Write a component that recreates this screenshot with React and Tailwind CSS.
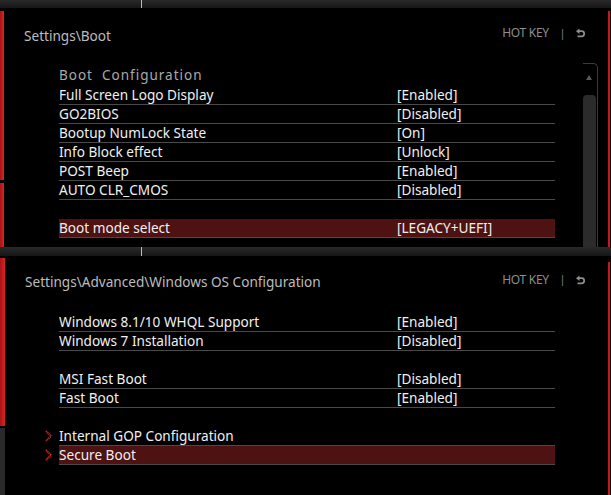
import React from "react";

const bootRows = [
  { label: "Full Screen Logo Display", value: "[Enabled]" },
  { label: "GO2BIOS", value: "[Disabled]" },
  { label: "Bootup NumLock State", value: "[On]" },
  { label: "Info Block effect", value: "[Unlock]" },
  { label: "POST Beep", value: "[Enabled]" },
  { label: "AUTO CLR_CMOS", value: "[Disabled]" },
  { blank: true },
  { label: "Boot mode select", value: "[LEGACY+UEFI]", active: true },
];

const osRows = [
  { label: "Windows 8.1/10 WHQL Support", value: "[Enabled]" },
  { label: "Windows 7 Installation", value: "[Disabled]" },
  { blank: true },
  { label: "MSI Fast Boot", value: "[Disabled]" },
  { label: "Fast Boot", value: "[Enabled]" },
  { blank: true },
  { label: "Internal GOP Configuration", arrow: "dim" },
  { label: "Secure Boot", arrow: "red", active: true },
];

const Chevron = ({ color }) => (
  <svg width="7" height="12" viewBox="0 0 7 12" className="absolute left-[-14px] top-[3px]">
    <polyline points="1,1 6,6 1,11" fill="none" stroke={color} strokeWidth="2" strokeDasharray="1.3 0.6" />
  </svg>
);

const Row = ({ label, value, active, arrow, blank }) => {
  if (blank) return <div className="h-[19px]" />;
  return (
    <div
      className={`relative h-[19px] flex items-center border-b border-[#4a4a4a] text-[13.6px] text-[#f0f0f0] ${
        active ? "bg-[#4e1212]" : ""
      }`}
    >
      {arrow && <Chevron color={arrow === "red" ? "#e3201c" : "#b02a26"} />}
      <span className="w-[338px] shrink-0 leading-none">{label}</span>
      {value && <span className="leading-none">{value}</span>}
    </div>
  );
};

const HotKey = () => (
  <div className="flex items-center mb-[6px] text-[12px] text-[#8e8e8e] tracking-[-0.3px]">
    <span>HOT KEY</span>
    <span className="ml-[11px] text-[10px]">|</span>
    <svg width="11" height="10" viewBox="0 0 11 10" className="ml-[10px]">
      <path d="M4.5 0.5 L1 3.2 L4.5 6 Z" fill="#8e8e8e" />
      <path d="M3 3.2 H6.6 A2.6 2.6 0 0 1 6.6 8.4 H2.5" fill="none" stroke="#8e8e8e" strokeWidth="1.7" />
    </svg>
  </div>
);

const Band = ({ h }) => (
  <div className={`${h} relative bg-gradient-to-b from-[#2a2a2a] to-[#161616]`}>
    <div className="absolute left-[141px] top-0 bottom-0 w-px bg-[#bdbdbd]" />
  </div>
);

export default function App() {
  return (
    <div
      className="w-[611px] h-[495px] bg-black flex flex-col overflow-hidden"
      style={{ fontFamily: '"Noto Sans", "Open Sans", sans-serif' }}
    >
      <Band h="h-[8px]" />

      {/* Settings\Boot */}
      <div className="h-[239px] flex">
        <div className="w-[4px] flex flex-col pt-[3px] gap-[3px]">
          <div className="h-[169px] bg-gradient-to-r from-[#a51414] to-[#e02222]" />
          <div className="flex-1 bg-gradient-to-r from-[#a51414] to-[#e02222]" />
        </div>
        <div className="flex-1 flex flex-col">
          <div className="flex justify-between items-center pl-[20px] pr-[22px] pt-[19px] h-[37px]">
            <span className="text-[13.6px] text-[#bcbcbc]">{"Settings\\Boot"}</span>
            <HotKey />
          </div>
          <div className="flex flex-1 mt-[18px]">
            <div className="ml-[55px] w-[496px] pt-[3px]">
              <div className="h-[20px] pb-[2px] flex items-center text-[13.5px] text-[#a9a9a9] tracking-[1px]">
                Boot&nbsp; Configuration
              </div>
              {bootRows.map((r, i) => (
                <Row key={i} {...r} />
              ))}
            </div>
            <div className="ml-[28px] w-[15px] flex flex-col border-t border-r border-[#3a3a3a] rounded-tr-[5px]">
              <div className="h-[31px] flex justify-center pt-[11px] pr-[3px]">
                <div className="w-0 h-0 border-l-[3px] border-r-[3px] border-b-[5px] border-l-transparent border-r-transparent border-b-[#5a5a5a]" />
              </div>
              <div className="flex-1 mr-[1px] bg-[#2b2b2b] rounded-t-[4px]" />
            </div>
          </div>
        </div>
        <div className="w-[2px] mt-[3px] bg-[#c81818] mr-[1px]" />
      </div>

      <Band h="h-[9px]" />

      {/* Settings\Advanced\Windows OS Configuration */}
      <div className="flex-1 flex">
        <div className="w-[5px] flex flex-col pt-[2px] gap-[2px]">
          <div className="h-[168px] bg-gradient-to-r from-[#a51414] to-[#e02222]" />
          <div className="flex-1 bg-[#2a2a2a]" />
        </div>
        <div className="flex-1 flex flex-col">
          <div className="flex justify-between items-center pl-[20px] pr-[22px] pt-[17px] h-[36px]">
            <span className="text-[13.6px] text-[#bcbcbc]">
              {"Settings\\Advanced\\Windows OS Configuration"}
            </span>
            <HotKey />
          </div>
          <div className="ml-[54px] w-[496px] mt-[21px]">
            {osRows.map((r, i) => (
              <Row key={i} {...r} />
            ))}
          </div>
        </div>
        <div className="w-[2px] mt-[6px] bg-[#c81818] mr-[1px]" />
      </div>
    </div>
  );
}
